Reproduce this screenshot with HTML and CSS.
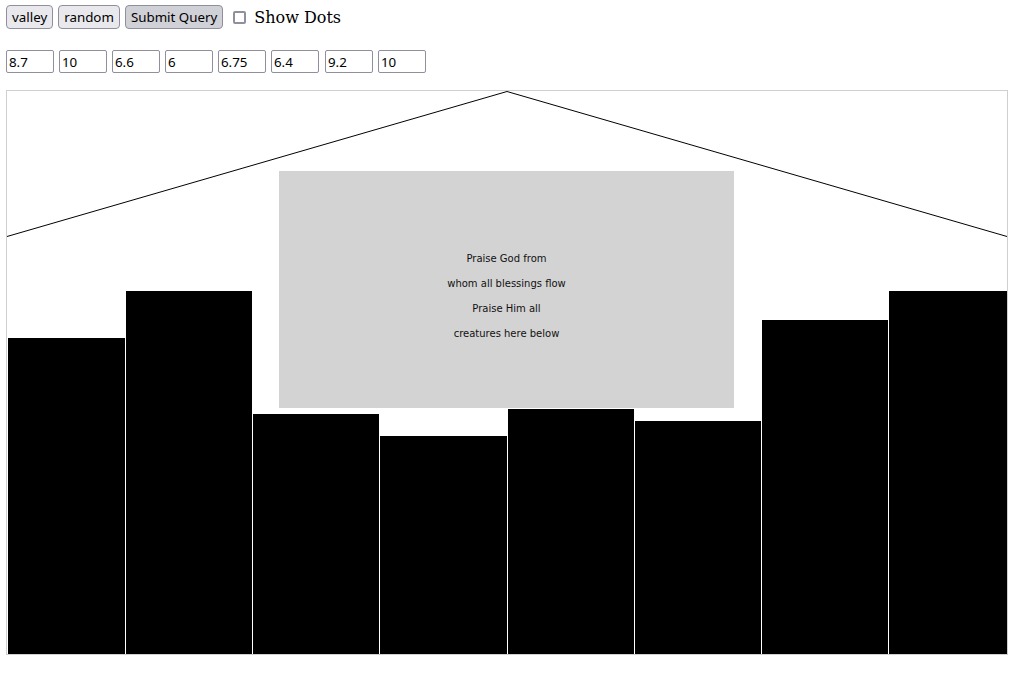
FILE: index.html
```html
<!DOCTYPE html>
<html>
<head>
<meta charset="utf-8">
<link rel="stylesheet" href="styles.css">
</head>
<body>
<div class="controls">
  <button class="btn">valley</button>
  <button class="btn">random</button>
  <button class="btn btn-active">Submit Query</button>
  <label class="toggle"><input type="checkbox" class="check"><span class="toggle-text">Show Dots</span></label>
</div>
<div class="values">
  <input class="val" type="text" value="8.7">
  <input class="val" type="text" value="10">
  <input class="val" type="text" value="6.6">
  <input class="val" type="text" value="6">
  <input class="val" type="text" value="6.75">
  <input class="val" type="text" value="6.4">
  <input class="val val-shift" type="text" value="9.2">
  <input class="val" type="text" value="10">
</div>
<div class="chart">
  <div class="bars">
    <div class="bar bar-first" style="height:316px"></div>
    <div class="bar" style="height:363px"></div>
    <div class="bar" style="height:240px"></div>
    <div class="bar bar-wide" style="height:218px"></div>
    <div class="bar" style="height:245px"></div>
    <div class="bar" style="height:233px"></div>
    <div class="bar" style="height:334px"></div>
    <div class="bar bar-last" style="height:363px"></div>
  </div>
  <svg class="roof" width="1000" height="563" viewBox="0 0 1000 563">
    <polyline points="0,145.5 500,0.5 1000,145.5" fill="none" stroke="#000" stroke-width="1"/>
  </svg>
  <div class="verse">
    <p class="line">Praise God from</p>
    <p class="line">whom all blessings flow</p>
    <p class="line">Praise Him all</p>
    <p class="line">creatures here below</p>
  </div>
</div>
</body>
</html>
```
FILE: styles.css
```css
html, body {
  margin: 0;
  padding: 0;
  background: #fff;
}
body {
  font-family: "DejaVu Serif", serif;
}
.controls {
  display: flex;
  align-items: center;
  padding: 5px 6px 0;
  height: 24px;
}
.btn {
  height: 24px;
  margin: 0 5px 0 0;
  padding: 0 5px;
  border: 1px solid #8f8f9d;
  border-radius: 4px;
  background: #e9e9ed;
  color: #000;
  font-family: "Noto Sans", sans-serif;
  font-size: 13.33px;
  line-height: 22px;
}
.btn-active {
  background: #d0d0d7;
}
.toggle {
  display: flex;
  align-items: center;
  margin-left: 5px;
}
.check {
  appearance: none;
  -webkit-appearance: none;
  width: 13px;
  height: 13px;
  margin: 1px 8px 0 0;
  box-sizing: border-box;
  border: 2px solid #8f8f9d;
  border-radius: 2px;
  background: #fff;
}
.toggle-text {
  font-family: "DejaVu Serif", serif;
  font-size: 16px;
  color: #000;
}
.values {
  display: flex;
  gap: 5px;
  padding: 21px 6px 0;
}
.val {
  box-sizing: border-box;
  width: 48px;
  height: 23px;
  margin: 0;
  padding: 0 2px;
  border: 1px solid #8f8f9d;
  border-radius: 2px;
  font-family: "Noto Sans", sans-serif;
  font-size: 13.33px;
  color: #000;
  background: #fff;
}
.val-shift {
  margin-left: 1px;
}
.chart {
  position: relative;
  width: 1000px;
  height: 563px;
  margin: 17px 0 0 6px;
  border: 1px solid #cfcfcf;
}
.bars {
  display: flex;
  align-items: flex-end;
  gap: 1px;
  height: 100%;
  padding-left: 1px;
}
.bar {
  width: 126px;
  flex: none;
  background: #000;
}
.bar-first {
  width: 117px;
}
.bar-wide {
  width: 127px;
}
.bar-last {
  width: 118px;
}
.roof {
  position: absolute;
  left: 0;
  top: 0;
}
.verse {
  position: absolute;
  left: 272px;
  top: 80px;
  width: 455px;
  height: 237px;
  box-sizing: border-box;
  padding-top: 75px;
  background: #d3d3d3;
  display: flex;
  flex-direction: column;
  align-items: center;
}
.line {
  margin: 0;
  font-family: "DejaVu Sans", sans-serif;
  font-size: 10px;
  line-height: 25px;
  color: #111;
}
```
